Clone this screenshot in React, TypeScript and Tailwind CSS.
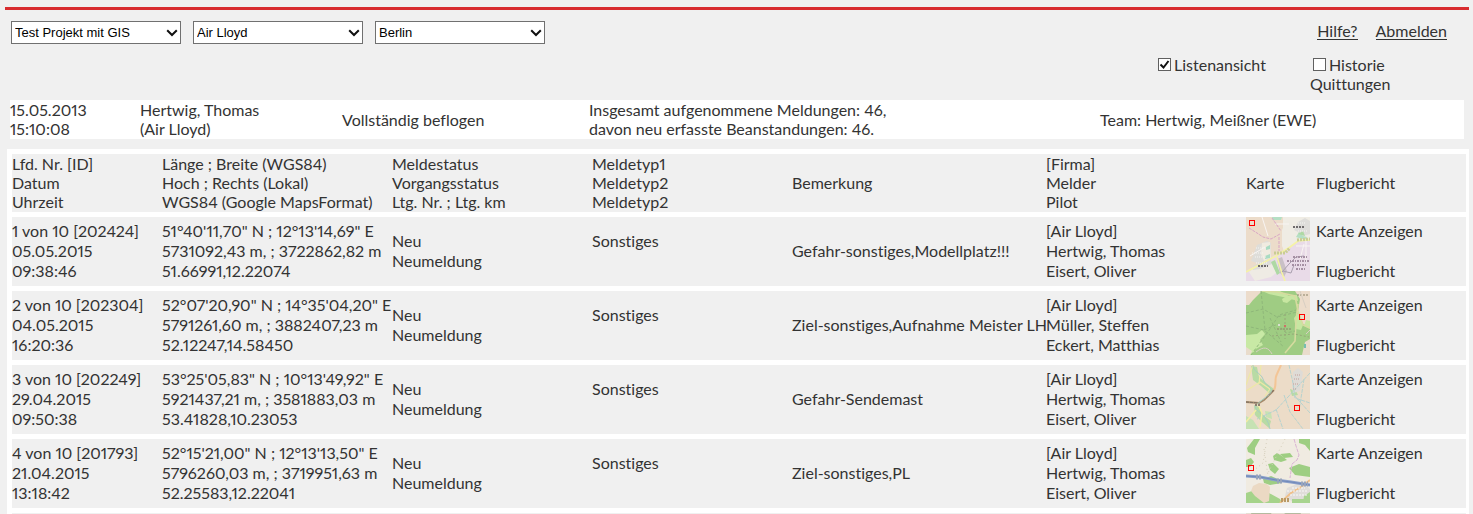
import { useState, type ReactNode } from "react";

type Meldung = {
  nr: string;
  datum: string;
  zeit: string;
  pos: string[];
  typ: string;
  bemerkung: string;
  personen: string[];
  karte: ReactNode;
};

function Frame({ bg, x, y, children }: { bg: string; x: number; y: number; children: ReactNode }) {
  return (
    <svg viewBox="0 0 64 64" className="block size-16" aria-hidden="true">
      <rect width="64" height="64" fill={bg} />
      {children}
      <rect x={x + 0.5} y={y + 0.5} width="5" height="5" fill="none" stroke="#ff0000" />
    </svg>
  );
}

const karte1 = (
  <Frame bg="#ecdcca" x={3} y={3}>
    <path d="M37 0h27v23l-12 3-12 9-3-3z" fill="#f0ede5" />
    <path d="M36 13l4-9 5-1 2 7 9 5 8 2v5l-10 1-9 10-6 3-3-7z" fill="#efece4" />
    <path d="M48 13l4-8 7-4 5 3v13l-7 2-5-4z" fill="#deddda" />
    <path d="M26 0h10l-1 3h-8zM50 20l3-5 4 4 4 1-2 3z" fill="#b5dfc4" />
    <path d="M5 44l6-16 10-4 4 2v15l-8 7z" fill="#deddd9" />
    <path d="M16 26l8-1 1 17-6 4-4-9z" fill="#f0ebe0" />
    <path d="M20 30l4-2v4l-4 1zM19 39l5-2v4l-5 1z" fill="#a9dbc2" />
    <path d="M64 24v40H0V54l28-15 16-9 10-7z" fill="#e9dbe8" />
    <path d="M3 55l11-8 11-2 6 10-6 5-16 4z" fill="#efebe4" />
    <path d="M7 49l9-4 8-4 2 6-12 5-7 1z" fill="#dddcda" />
    <path d="M25 45l4-2 5 13-3 2zM52 17l5-3 2 5z" fill="#aed9a4" />
    <path d="M31 42l5-2 5 14-3 6-4-4z" fill="#c9c0c6" />
    <path d="M0 55l30-16 14-9 8-6 12-1M31 40l5 16 3 8" fill="none" stroke="#f5f3a5" strokeWidth="1.6" />
    <path d="M28 36h11l5-5M51 23l13-1" fill="none" stroke="#c9cd93" strokeWidth="3" strokeDasharray="2 1" />
    <path d="M16 0l6 19M29 7h14M4 39l15-9M50 29h14M54 42l4-15M60 24v21" fill="none" stroke="#f8f4f2" strokeWidth="1" />
    <path d="M3 11l8 5 6 4 8 2 9-5M26 1l9 13M33 20v14" fill="none" stroke="#d9a6c5" strokeWidth="1" strokeDasharray="3 1" />
    <path d="M36 55l7-8 7-7 8-1M37 54l8 2 3-8" fill="none" stroke="#aaa0af" strokeWidth="1" />
    <path d="M47 10h11M12 49h10" stroke="#6f6b6c" strokeWidth="2" strokeDasharray="2 1" />
    <path d="M47 40h14M41 44h22M46 48h15M50 52h9" stroke="#a58fa3" strokeWidth="2" strokeDasharray="2 1 1 1" />
    <path d="M6 36h11m-7-5h9m-10 9h12M52 6h8m-8 8h10M10 46h12" stroke="#f4f4f2" strokeWidth="1" strokeDasharray="1 1" />
  </Frame>
);

const karte2 = (
  <Frame bg="#9fcc83" x={53} y={23}>
    <path d="M0 0h16l-9 9-4 5H0zM49 0h15v36l-7-3-5-13 2-12z" fill="#ecdccb" />
    <path d="M16 0h18l9 5 8-1 1 6-15-4-14-3zM48 27l5-6 4 13-2 5-5-1z" fill="#c7e6a1" />
    <path d="M36 8l5-3 5 3-5 4-4-1zM60 29l4 1v8l-6-3z" fill="#c7e6a1" />
    <path d="M0 44l11-1 5-4 3 4-5 6 3 5-7 4-5 6H0z" fill="#c8e9a5" />
    <path d="M0 56l6 4-2 4H0zM56 64l3-13 5-3v16z" fill="#e9dccc" />
    <path d="M16 0l15 1 18 4 3 15 5 14 7 3M52 13l-2 17-1 20-10 12" fill="none" stroke="#d6db9f" strokeWidth="1.6" />
    <path d="M0 22l17-4 14 8 20-5M15 0l4 39M5 64l19-26 9-14 17-5M18 39l14-6 8 9 9-2M24 27l11 24M0 35l18 4 20 17" fill="none" stroke="#8fb77a" strokeWidth="1" strokeDasharray="3 2" />
    <path d="M39 23v25M26 45l22-2 15 3" fill="none" stroke="#96a878" strokeWidth="1" strokeDasharray="2 2" />
    <path d="M31 38h15M51 4h11" stroke="#8a8468" strokeWidth="1" strokeDasharray="2 1" />
    <path d="M38 35h2" stroke="#cf7066" strokeWidth="2" />
    <path d="M32 34h2" stroke="#d9e0d0" strokeWidth="2" />
    <path d="M58 53h2v4h-2z" fill="#76bdb0" />
    <path d="M10 61c8-6 12-5 16 2M54 0l6 17M60 43l4-4" fill="none" stroke="#d7cec2" />
  </Frame>
);

const karte3 = (
  <Frame bg="#ecdcc8" x={48} y={40}>
    <path d="M5 1l6 1 2 10 7 6 8 6-5 4-8-7-8-6zM8 40l5 2 4 8 8 6-2 7-7-6-7-7zM44 24l6 2 2 4-6 1z" fill="#b8dba4" />
    <path d="M0 51l7 4 6 9H0zM19 46l6 1 1 7-6-2z" fill="#c6e2b3" />
    <path d="M47 7l5-4 5 4-3 19-7 2-1-8z" fill="#dedbd6" />
    <path d="M0 26l14-9 10 7-5 7M15 0l-2 19M0 20l7-20" fill="none" stroke="#eee8a6" strokeWidth="1.2" />
    <path d="M0 37l13 1 5-3 4-4 6-6" fill="none" stroke="#a58a6c" strokeWidth="2" />
    <path d="M0 37l13 1M20 33l8-8" fill="none" stroke="#7d7163" strokeWidth="1" strokeDasharray="3 1" />
    <path d="M28 25c3-5 0-11 3-16l4-9" fill="none" stroke="#f3c596" strokeWidth="2" />
    <path d="M7 0c-1 6 8 8 10 14s6 7 8 10-3 7-9 11c-6 5-9 7-4 11s10 8 12 18" fill="none" stroke="#a6cec0" strokeWidth="1" />
    <path d="M64 8L42 32 30 45l-19 9M43 0l4 18 2 15 15 5M38 30l6 17 13 17M64 48L47 29M30 44l7 20M58 14l-5 32" fill="none" stroke="#b5d2cf" strokeWidth="1" strokeDasharray="4 1" />
    <path d="M12 39l4 9-2 14M0 57l10-12" fill="none" stroke="#f4eda4" strokeWidth="1.5" />
    <path d="M49 10h6m-7 4h6m-7 5h6m-6 5h4" stroke="#c49c96" strokeWidth="1" strokeDasharray="1 1" />
    <path d="M9 40h6" stroke="#8e8073" strokeWidth="2" strokeDasharray="2 1" />
  </Frame>
);

const karte4 = (
  <Frame bg="#f0ebe1" x={2} y={26}>
    <path d="M1 9l7-9 6 0-5 9 0 7-7-3zM27 17l4-3 5 3 5 4-6 2-7-2zM53 0h11v12l-5-6-6-2z" fill="#9ece82" />
    <path d="M0 28l0-7 5-2 3 4-4 5zM43 29l10-4 11 3v10l-15-2zM17 40l8-3 9 4 2 3-12 2-6-2z" fill="#9ece82" />
    <path d="M22 25l5-1 6 6-4 5-5-4zM34 15l10-1 3 4-9 1z" fill="#9ece82" />
    <path d="M0 54l9-3 14 3 11 6 2 4H0z" fill="#a5d38a" />
    <path d="M7 47l6-3 8 1 3 3-1 14-5 2-9-7-4-5z" fill="#ebd9c3" />
    <path d="M41 49l10-4 8 1 5 4v14H48l-9-7z" fill="#e0ddda" />
    <path d="M46 60h18v4H46zM58 57l6-4v11h-7z" fill="#a8d48f" />
    <path d="M34 64l11-10 10-6 9-7" fill="none" stroke="#f0c08a" strokeWidth="2" />
    <path d="M0 37l14 1 16 3 15 2 19 3" fill="none" stroke="#8ba0cb" strokeWidth="3" />
    <path d="M0 37l14 1 16 3 15 2 19 3" fill="none" stroke="#7189b8" strokeWidth="1" />
    <path d="M10 38h6m15 4h6m18 3h7" stroke="#98a4ba" strokeWidth="5" strokeDasharray="2 1" />
    <path d="M35 61h8" stroke="#b99a66" strokeWidth="4" strokeDasharray="2 1" />
    <path d="M48 0l2 7 3 9-2 5-5 4-2 14" fill="none" stroke="#d9b3d3" strokeWidth="1" strokeDasharray="4 1" />
    <path d="M7 32l10-8 4-24M18 10l4 27M39 0L22 34" fill="none" stroke="#d6cfbb" strokeWidth="1" strokeDasharray="1 3" />
    <path d="M41 52h21M44 56h17M46 49h13" stroke="#f9f8f7" strokeWidth="1" strokeDasharray="2 1" />
  </Frame>
);

const karte5 = (
  <Frame bg="#e6dfd3" x={20} y={30}>
    <path d="M5 0h20l5 9H8zM38 0h17l-4 9z" fill="#b5ba9f" />
  </Frame>
);

const meldungen: Meldung[] = [
  {
    nr: "1 von 10 [202424]",
    datum: "05.05.2015",
    zeit: "09:38:46",
    pos: ["51°40'11,70\" N ; 12°13'14,69\" E", "5731092,43 m, ; 3722862,82 m", "51.66991,12.22074"],
    typ: "Sonstiges",
    bemerkung: "Gefahr-sonstiges,Modellplatz!!!",
    personen: ["[Air Lloyd]", "Hertwig, Thomas", "Eisert, Oliver"],
    karte: karte1,
  },
  {
    nr: "2 von 10 [202304]",
    datum: "04.05.2015",
    zeit: "16:20:36",
    pos: ["52°07'20,90\" N ; 14°35'04,20\" E", "5791261,60 m, ; 3882407,23 m", "52.12247,14.58450"],
    typ: "Sonstiges",
    bemerkung: "Ziel-sonstiges,Aufnahme Meister LH",
    personen: ["[Air Lloyd]", "Müller, Steffen", "Eckert, Matthias"],
    karte: karte2,
  },
  {
    nr: "3 von 10 [202249]",
    datum: "29.04.2015",
    zeit: "09:50:38",
    pos: ["53°25'05,83\" N ; 10°13'49,92\" E", "5921437,21 m, ; 3581883,03 m", "53.41828,10.23053"],
    typ: "Sonstiges",
    bemerkung: "Gefahr-Sendemast",
    personen: ["[Air Lloyd]", "Hertwig, Thomas", "Eisert, Oliver"],
    karte: karte3,
  },
  {
    nr: "4 von 10 [201793]",
    datum: "21.04.2015",
    zeit: "13:18:42",
    pos: ["52°15'21,00\" N ; 12°13'13,50\" E", "5796260,03 m, ; 3719951,63 m", "52.25583,12.22041"],
    typ: "Sonstiges",
    bemerkung: "Ziel-sonstiges,PL",
    personen: ["[Air Lloyd]", "Hertwig, Thomas", "Eisert, Oliver"],
    karte: karte4,
  },
];

function Lines({ items }: { items: string[] }) {
  return (
    <>
      {items.map((t, i) => (
        <div key={i}>{t}</div>
      ))}
    </>
  );
}

function Auswahl({ label, options }: { label: string; options: string[] }) {
  return (
    <div className="grid w-[170px] items-center">
      <select
        aria-label={label}
        className="col-start-1 row-start-1 h-[23px] w-full appearance-none border border-[#707070] bg-white pl-[3px] font-['Liberation_Sans',Arial,sans-serif] text-[13px] leading-[19px] text-black"
      >
        {options.map((o) => (
          <option key={o}>{o}</option>
        ))}
      </select>
      <svg
        viewBox="0 0 12 8"
        className="pointer-events-none col-start-1 row-start-1 mr-[3px] h-2 w-3 justify-self-end"
        aria-hidden="true"
      >
        <path d="M1.2 1.2L6 6l4.800-4.800" fill="none" stroke="#111" strokeWidth="2" />
      </svg>
    </div>
  );
}

function Haken({ label, initial }: { label: string; initial: boolean }) {
  const [on, setOn] = useState(initial);
  return (
    <label className="block">
      <span className="mx-[3px] inline-grid size-[13px] align-baseline">
        <input
          type="checkbox"
          checked={on}
          onChange={() => setOn(!on)}
          className="col-start-1 row-start-1 size-[13px] appearance-none border border-[#606060] bg-white"
        />
        {on && (
          <svg viewBox="0 0 13 13" className="pointer-events-none col-start-1 row-start-1 size-[13px]" aria-hidden="true">
            <path d="M2.500 6.500l3 3L10.500 3" fill="none" stroke="#111" strokeWidth="2" />
          </svg>
        )}
      </span>
      {label}
    </label>
  );
}

export default function App() {
  return (
    <div className="min-h-screen bg-[#f0f0f0] pt-[7px] pr-1 pl-[5px] font-['Lato',sans-serif] text-[16px] leading-[19px] text-[#333] proportional-nums [font-variant-ligatures:none]">
      <div className="h-[3px] bg-[#d82c2f]" />

      <header className="flex h-[90px] items-start justify-between pt-[11px] pl-[6px]">
        <div className="flex gap-3">
          <Auswahl label="Projekt" options={["Test Projekt mit GIS"]} />
          <Auswahl label="Firma" options={["Air Lloyd"]} />
          <Auswahl label="Region" options={["Berlin"]} />
        </div>
        <div className="w-[314px]">
          <nav className="flex justify-end gap-[18px] pt-px pr-[22px]">
            <a href="#hilfe" className="border-b border-[#333] leading-[17px]">
              Hilfe?
            </a>
            <a href="#abmelden" className="border-b border-[#333] leading-[17px]">
              Abmelden
            </a>
          </nav>
          <div className="mt-[15px] flex">
            <div className="w-[155px]">
              <Haken label="Listenansicht" initial={true} />
            </div>
            <div className="w-[110px]">
              <Haken label="Historie Quittungen" initial={false} />
            </div>
          </div>
        </div>
      </header>

      <section className="mr-[5px] ml-[5px] flex items-center bg-white pb-px">
        <div className="w-[130px]">
          <Lines items={["15.05.2013", "15:10:08"]} />
        </div>
        <div className="w-[202px]">
          <Lines items={["Hertwig, Thomas", "(Air Lloyd)"]} />
        </div>
        <div className="w-[247px]">Vollständig beflogen</div>
        <div className="w-[511px]">
          <Lines items={["Insgesamt aufgenommene Meldungen: 46,", "davon neu erfasste Beanstandungen: 46."]} />
        </div>
        <div className="flex-1">Team: Hertwig, Meißner (EWE)</div>
      </section>

      <main className="mt-[10px] ml-[2px] bg-white pr-[3px] pl-[5px]">
        <table className="w-full table-fixed border-separate border-spacing-x-0 border-spacing-y-[5px] text-left whitespace-nowrap">
          <colgroup>
            <col className="w-[150px]" />
            <col className="w-[230px]" />
            <col className="w-[200px]" />
            <col className="w-[200px]" />
            <col className="w-[254px]" />
            <col className="w-[200px]" />
            <col className="w-[70px]" />
            <col />
          </colgroup>
          <thead>
            <tr className="h-[58px] bg-[#f0f0f0] [&>th]:p-0 [&>th]:pb-px [&>th]:font-normal">
              <th><Lines items={["Lfd. Nr. [ID]", "Datum", "Uhrzeit"]} /></th>
              <th><Lines items={["Länge ; Breite (WGS84)", "Hoch ; Rechts (Lokal)", "WGS84 (Google MapsFormat)"]} /></th>
              <th><Lines items={["Meldestatus", "Vorgangsstatus", "Ltg. Nr. ; Ltg. km"]} /></th>
              <th><Lines items={["Meldetyp1", "Meldetyp2", "Meldetyp2"]} /></th>
              <th>Bemerkung</th>
              <th><Lines items={["[Firma]", "Melder", "Pilot"]} /></th>
              <th>Karte</th>
              <th>Flugbericht</th>
            </tr>
          </thead>
          <tbody className="leading-[20px]">
            {meldungen.map((m) => (
              <tr key={m.nr} className="h-[69px] bg-[#f0f0f0] [&>td]:p-0 [&>td]:pb-0.5">
                <td><Lines items={[m.nr, m.datum, m.zeit]} /></td>
                <td><Lines items={m.pos} /></td>
                <td><Lines items={["Neu", "Neumeldung"]} /></td>
                <td>
                  <div className="pb-5">{m.typ}</div>
                </td>
                <td>{m.bemerkung}</td>
                <td><Lines items={m.personen} /></td>
                <td className="align-top">{m.karte}</td>
                <td>
                  <a href="#karte" className="mb-5 block">Karte Anzeigen</a>
                  <a href="#flugbericht" className="block">Flugbericht</a>
                </td>
              </tr>
            ))}
            <tr className="h-[69px] bg-[#f0f0f0] [&>td]:p-0">
              <td colSpan={6} />
              <td className="align-top">{karte5}</td>
              <td />
            </tr>
          </tbody>
        </table>
      </main>
    </div>
  );
}
